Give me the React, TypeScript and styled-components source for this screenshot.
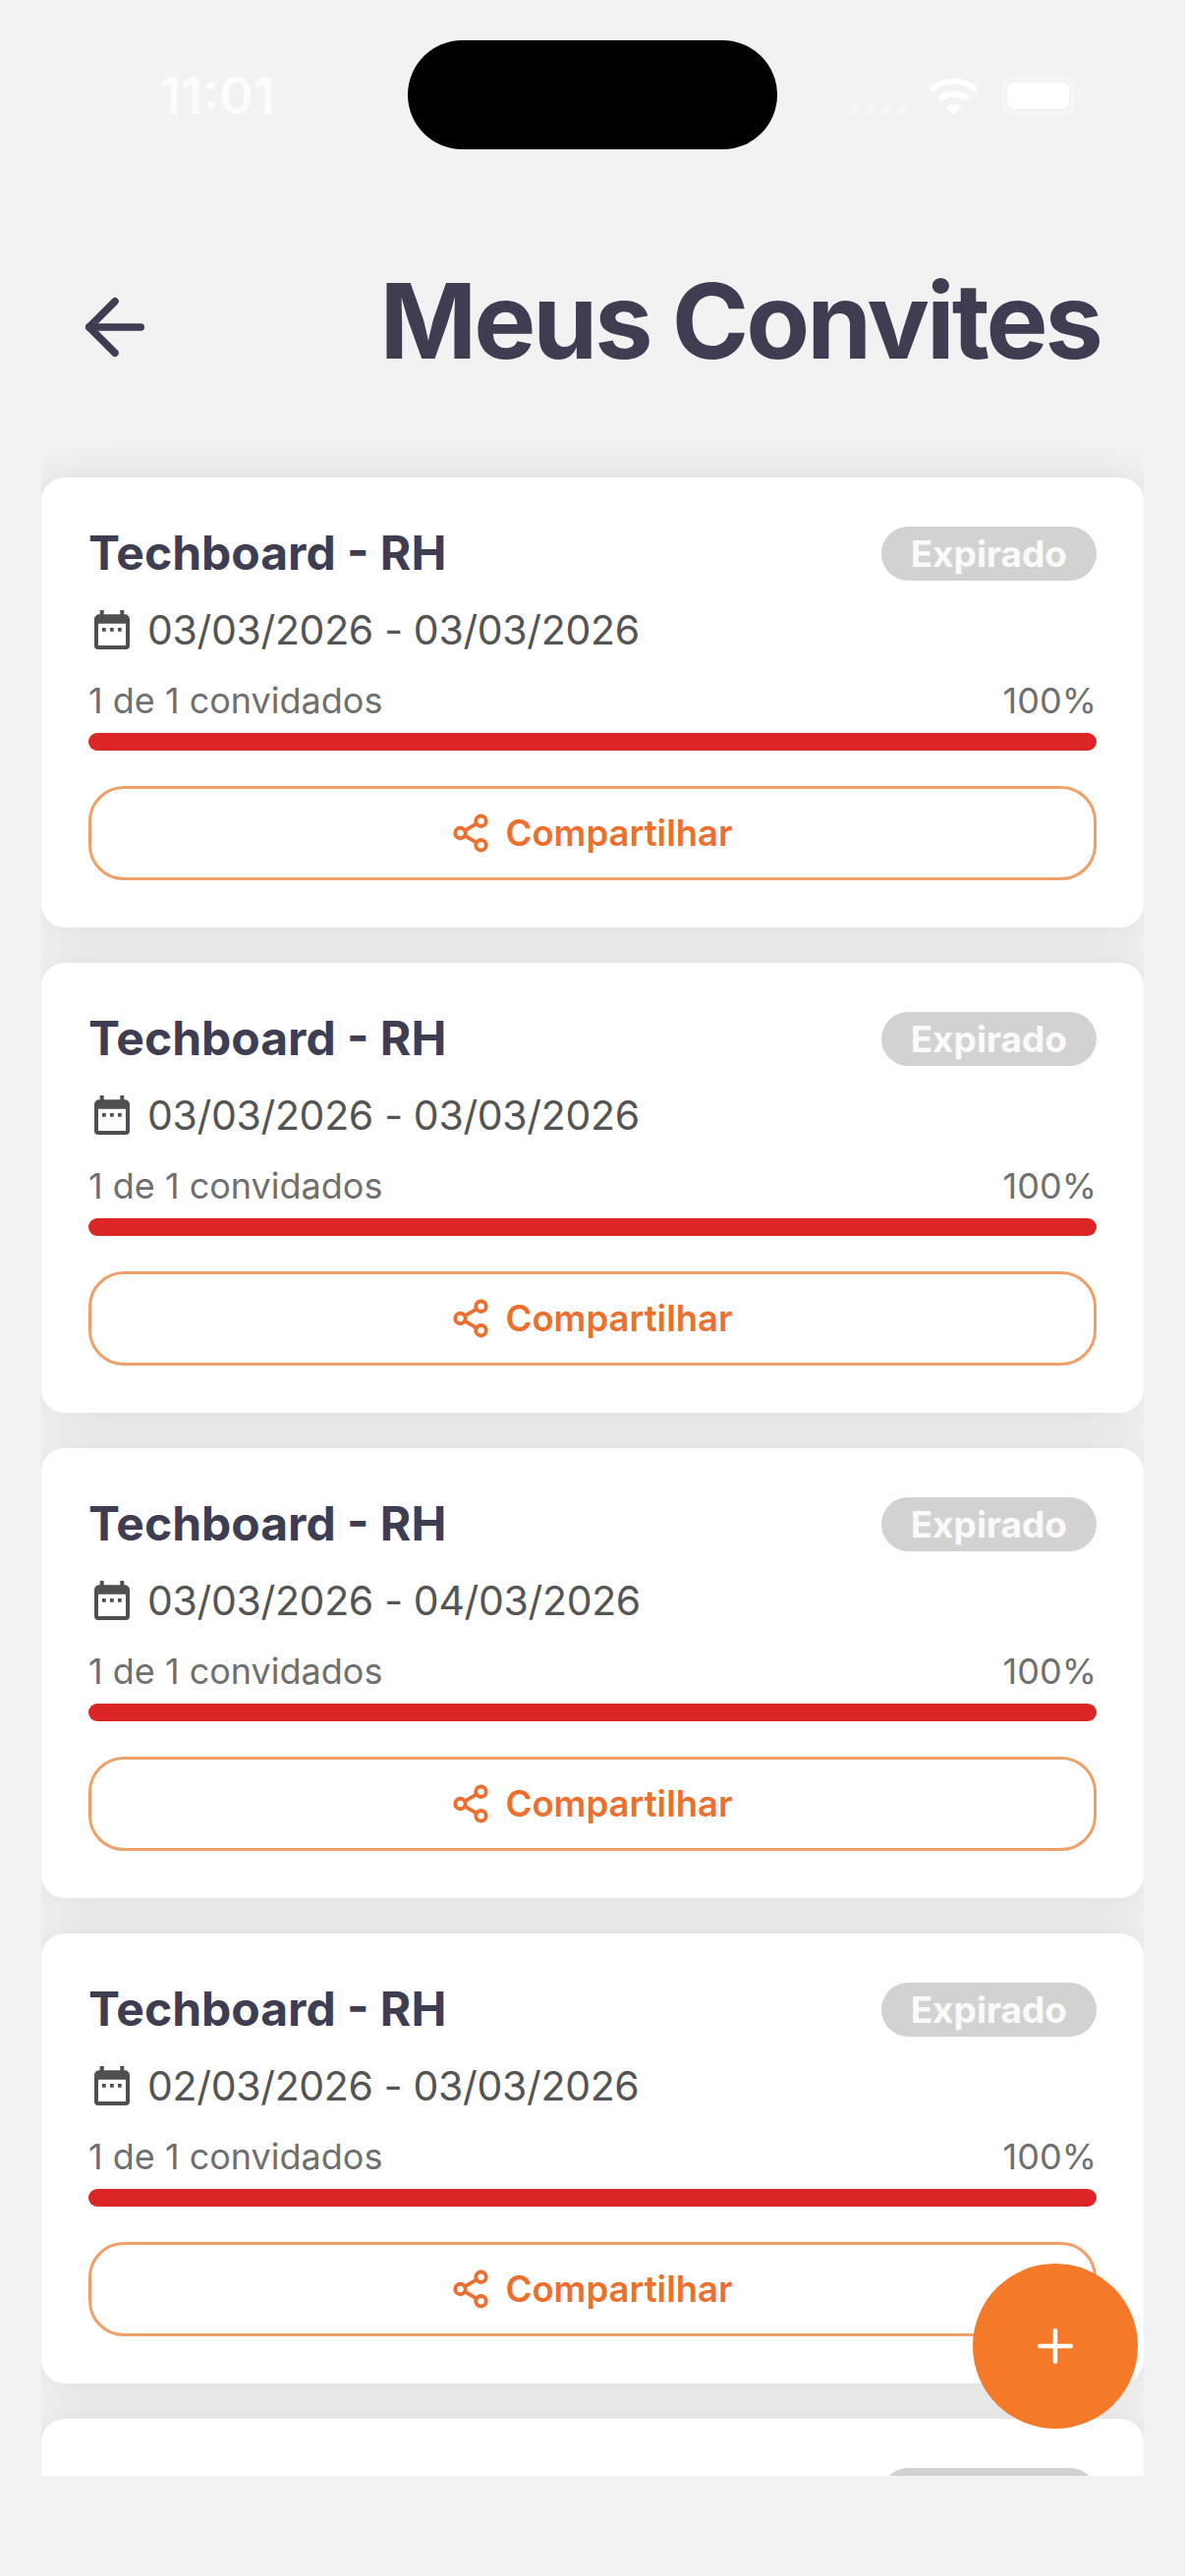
import React from "react";
import styled, { createGlobalStyle } from "styled-components";
import { ArrowLeft, Plus, Share2 } from "lucide-react";

const Global = createGlobalStyle`
  html, body { margin: 0; padding: 0; background: #f2f2f2; }
  * { box-sizing: border-box; }
`;

const Screen = styled.div`
  position: relative;
  width: 1206px;
  height: 2622px;
  overflow: hidden;
  background: #f2f2f2;
  font-family: Inter, "Liberation Sans", sans-serif;
`;

const StatusBar = styled.div`
  display: grid;
  grid-template-columns: 415px 376px 1fr;
  align-items: center;
  height: 152px;
  padding-top: 41px;
`;

const Clock = styled.span`
  padding: 2px 0 0 162px;
  font-size: 52.5px;
  font-weight: 600;
  line-height: 1;
  color: #fcfcfc;
`;

const Island = styled.div`
  height: 111px;
  border-radius: 56px;
  background: #000;
`;

const StatusIcons = styled.div`
  display: flex;
  align-items: flex-start;
  gap: 15px;
  padding-left: 74px;
  height: 40px;
`;

const Header = styled.header`
  display: flex;
  align-items: center;
  height: 296px;
  padding: 66px 86px 0 72px;
  color: #3f3d52;
`;

const Title = styled.h1`
  margin: 0 0 0 auto;
  padding-bottom: 12px;
  font-size: 106px;
  font-weight: 700;
  letter-spacing: -3px;
  line-height: 1;
  color: #3f3d52;
`;

const List = styled.main`
  display: flex;
  flex-direction: column;
  gap: 36px;
  height: 2072px;
  margin: 0 42px;
  padding-top: 38px;
  overflow: hidden;
`;

const Card = styled.article`
  flex: none;
  height: 458px;
  padding: 50px 48px 48px;
  border-radius: 24px;
  background: #fff;
  box-shadow: 0 0 44px rgba(0, 0, 0, 0.1);
`;

const TopRow = styled.div`
  display: flex;
  align-items: center;
  justify-content: space-between;
  height: 55px;
`;

const CardTitle = styled.h2`
  margin: 0;
  padding-bottom: 2px;
  font-size: 48px;
  font-weight: 700;
  line-height: 1;
  color: #3f3d52;
`;

const Badge = styled.span`
  display: flex;
  align-items: center;
  height: 55px;
  padding: 0 30px;
  border-radius: 28px;
  background: #d4d2d1;
  font-size: 37px;
  font-weight: 700;
  color: #fafafa;
`;

const DateRow = styled.div`
  display: flex;
  align-items: center;
  gap: 18px;
  height: 46px;
  margin-top: 27px;
  padding-left: 6px;
  font-size: 41px;
  letter-spacing: -0.33px;
  color: #545454;
`;

const LabelRow = styled.div`
  display: flex;
  justify-content: space-between;
  margin-top: 27px;
  font-size: 36px;
  line-height: 44px;
  color: #6f6f6f;
`;

const Bar = styled.div`
  height: 18px;
  margin-top: 11px;
  border-radius: 9px;
  background: #dc2626;
`;

const ShareButton = styled.button`
  display: flex;
  align-items: center;
  justify-content: center;
  gap: 14px;
  width: 100%;
  height: 96px;
  margin-top: 36px;
  padding: 0 2px 0 0;
  border: 3px solid #ef9f68;
  border-radius: 36px;
  background: #fff;
  font-family: inherit;
  font-size: 36.5px;
  font-weight: 600;
  color: #ee6f2d;
`;

const Fab = styled.button`
  position: absolute;
  left: 990px;
  top: 2304px;
  display: flex;
  align-items: center;
  justify-content: center;
  width: 168px;
  height: 168px;
  padding: 0;
  border: 0;
  border-radius: 50%;
  background: #f47a2a;
  color: #fff;
`;

const CalendarIcon = () => (
  <svg width="36" height="40" viewBox="0 0 36 40" fill="none">
    <path
      fillRule="evenodd"
      fill="#4f4f4f"
      d="M5.7 0h4v4.3h16.6V0h4v4.3H31a5 5 0 0 1 5 5V36a4 4 0 0 1-4 4H4a4 4 0 0 1-4-4V9.3a5 5 0 0 1 5-5h.7V0ZM4 13.7V36h28V13.7H4Z"
    />
    <path fill="#4f4f4f" d="M8 18h3.7v3.7H8zM16 18h3.7v3.7H16zM24 18h3.7v3.7H24z" />
  </svg>
);

const SignalIcons = () => (
  <svg width="140" height="40" viewBox="0 0 140 40" fill="none">
    <g fill="#f7f7f7">
      <circle cx="5" cy="35" r="5" />
      <circle cx="21" cy="35" r="5" />
      <circle cx="37" cy="35" r="5" />
      <circle cx="53" cy="35" r="5" />
    </g>
    <g fill="none" stroke="#fff" strokeWidth="6">
      <path d="M82 15C95 3 116 3 129 15" />
      <path d="M91 24c8-7 21-7 29 0" />
    </g>
    <path fill="#fff" d="M97 32c5-3.500 12-3.500 17 0l-8.500 8L97 32Z" />
  </svg>
);

const BatteryIcon = () => (
  <svg width="80" height="40" viewBox="0 0 80 40" fill="none">
    <rect x="1.5" y="2.5" width="70" height="36" rx="10" stroke="#f7f7f7" strokeWidth="3" />
    <rect x="5" y="7" width="63" height="27" rx="7" fill="#fff" />
    <path d="M75 15c2.500 1 3 3 3 5.500s-.5 4.500-3 5.500Z" fill="#f7f7f7" />
  </svg>
);

const invites = [
  "03/03/2026 - 03/03/2026",
  "03/03/2026 - 03/03/2026",
  "03/03/2026 - 04/03/2026",
  "02/03/2026 - 03/03/2026",
  "02/03/2026 - 03/03/2026",
];

export default function App() {
  return (
    <Screen>
      <Global />
      <StatusBar>
        <Clock>11:01</Clock>
        <Island />
        <StatusIcons>
          <SignalIcons />
          <BatteryIcon />
        </StatusIcons>
      </StatusBar>
      <Header>
        <ArrowLeft size={90} strokeWidth={2} />
        <Title>Meus Convites</Title>
      </Header>
      <List>
        {invites.map((dates, i) => (
          <Card key={i}>
            <TopRow>
              <CardTitle>Techboard - RH</CardTitle>
              <Badge>Expirado</Badge>
            </TopRow>
            <DateRow>
              <CalendarIcon />
              {dates}
            </DateRow>
            <LabelRow>
              <span>1 de 1 convidados</span>
              <span>100%</span>
            </LabelRow>
            <Bar />
            <ShareButton>
              <Share2 size={42} strokeWidth={2.2} />
              Compartilhar
            </ShareButton>
          </Card>
        ))}
      </List>
      <Fab aria-label="Novo convite">
        <Plus size={54} strokeWidth={2} />
      </Fab>
    </Screen>
  );
}
